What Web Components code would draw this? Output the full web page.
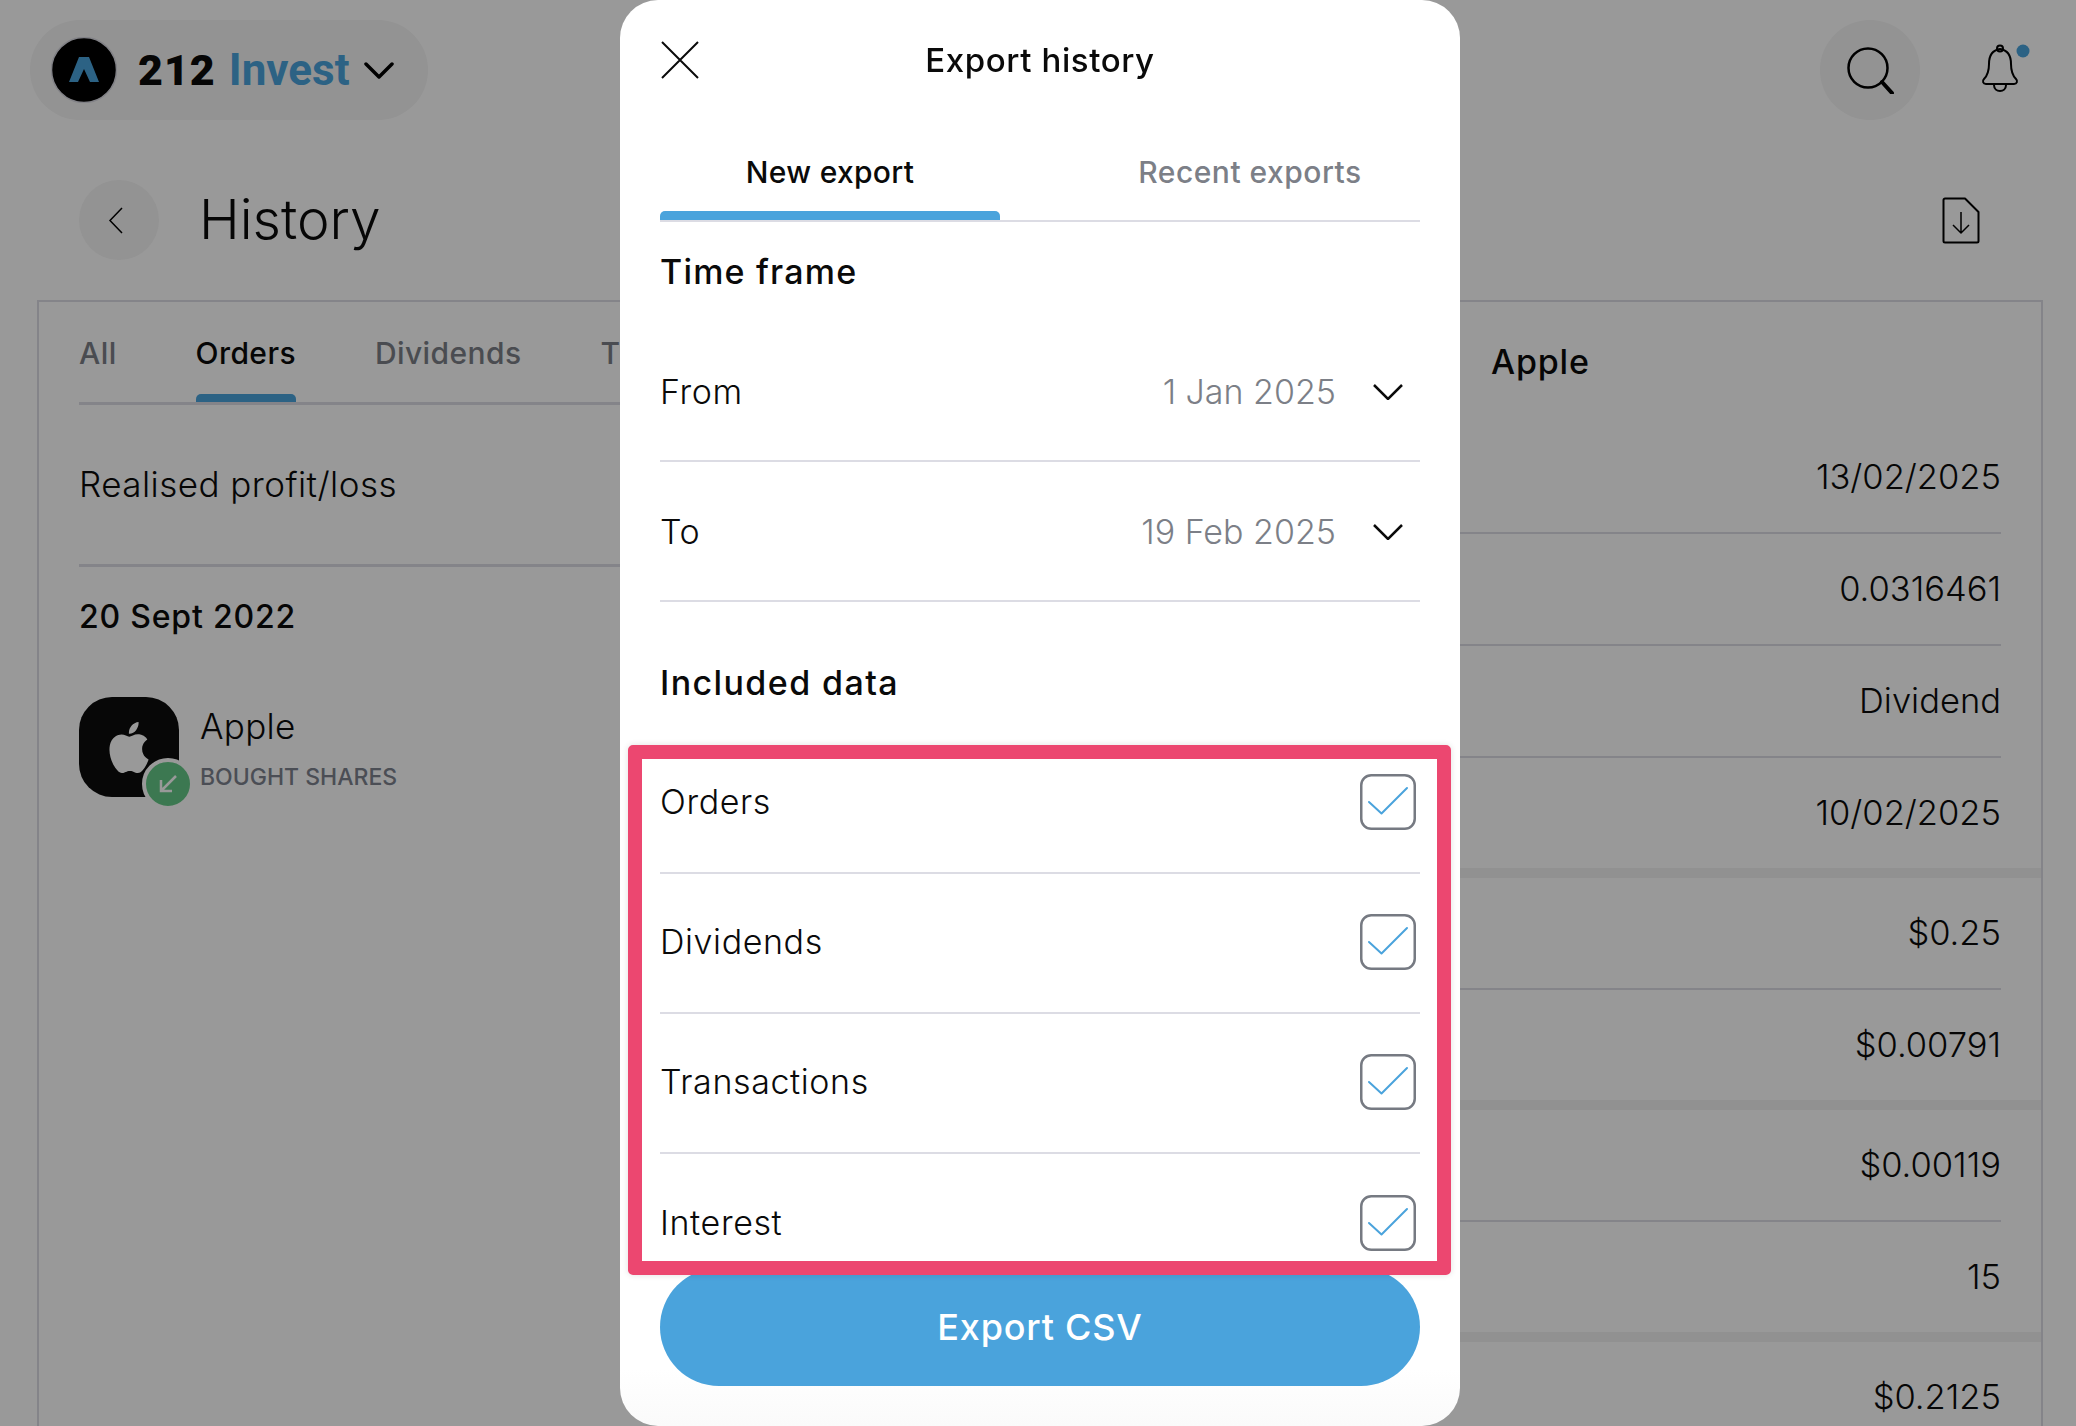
<!DOCTYPE html>
<html lang="en">
<head>
<meta charset="utf-8">
<title>Export history</title>
<style>
  html, body { margin: 0; height: 100%; overflow: hidden; background: #fff; }
  body { font-family: Inter, "Noto Sans", sans-serif; color: #0a0a0a; }
</style>
</head>
<body>
<app-header></app-header>
<page-title>History</page-title>
<history-panel>
  <order-list slot="left"></order-list>
  <order-detail slot="right"></order-detail>
</history-panel>
<export-modal></export-modal>

<script>
// Top bar: account switcher on the left, search and notifications on the right
class AppHeader extends HTMLElement {
  constructor() {
    super();
    this.attachShadow({ mode: 'open' });
  }

  connectedCallback() {
    this.shadowRoot.innerHTML = `
      <style>
        :host { display: flex; justify-content: space-between; align-items: center; height: 100px; padding: 20px 46px 0 30px; }
        .account { display: flex; align-items: center; height: 100px; width: 398px; box-sizing: border-box; padding-left: 21px; border-radius: 50px; background: #f5f5f5; }
        .logo { width: 66px; height: 66px; flex: none; }
        .brand { margin-left: 21px; font: 700 44px/1 "Liberation Sans Narrow", Roboto, sans-serif; display: flex; gap: 13px; }
        .num { font-family: Roboto, sans-serif; font-size: 43px; font-weight: 900; letter-spacing: 1px; line-height: 44px; }
        .name { color: #4aa3dc; }
        .caret { width: 30px; height: 17px; margin-left: 14px; }
        .tools { display: flex; align-items: center; }
        .search { width: 100px; height: 100px; border-radius: 50%; background: #f5f5f5; display: flex; align-items: center; justify-content: center; }
        .bell { width: 50px; height: 52px; margin-left: 60px; margin-top: 0; }
      </style>
      <div class="account">
        <svg class="logo" viewBox="0 0 66 66">
          <circle cx="33" cy="33" r="32.500" fill="#000" stroke="#d8d8e0" stroke-width="1.500"/>
          <path d="M28 20h10l10 25h-9l-6-13-6 13h-9z" fill="#4aa3dc"/>
        </svg>
        <div class="brand"><span class="num">212</span><span class="name">Invest</span></div>
        <svg class="caret" viewBox="0 0 30 17" fill="none" stroke="#000" stroke-width="3.500" stroke-linecap="round" stroke-linejoin="round"><path d="M2 2l13 13L28 2"/></svg>
      </div>
      <div class="tools">
        <div class="search">
          <svg width="48" height="48" viewBox="0 0 48 48" fill="none" stroke="#000">
            <circle cx="22" cy="22" r="19.500" stroke-width="2.500"/>
            <path d="M36 36l10 11" stroke-width="4" stroke-linecap="round"/>
          </svg>
        </div>
        <svg class="bell" viewBox="0 0 50 52" fill="none" stroke="#000" stroke-width="2">
          <path d="M20 40H6c-3 0-4-3-2-5 4-4 5-8 5-15 0-9 4-14 11-15 7 1 11 6 11 15 0 7 1 11 5 15 2 2 1 5-2 5z"/>
          <circle cx="20" cy="4.500" r="3"/>
          <path d="M14 41c0 4 3 6 6 6s6-2 6-6"/>
          <circle cx="43" cy="7" r="6.500" fill="#4aa3dc" stroke="none"/>
        </svg>
      </div>
    `;
  }
}

// Back button, page heading and the export icon
class PageTitle extends HTMLElement {
  constructor() {
    super();
    this.attachShadow({ mode: 'open' });
  }

  connectedCallback() {
    this.shadowRoot.innerHTML = `
      <style>
        :host { display: flex; align-items: center; height: 80px; padding: 60px 96px 40px 79px; }
        .back { width: 80px; height: 80px; border-radius: 50%; background: #f5f5f5; display: flex; align-items: center; justify-content: center; }
        .back svg { margin-right: 8px; }
        h1 { margin: 0 0 0 40px; font-size: 55px; font-weight: 300; line-height: 78px; height: 80px; flex: 1; }
      </style>
      <div class="back">
        <svg width="15" height="27" viewBox="0 0 15 27" fill="none" stroke="#000" stroke-width="1.500"><path d="M14 1L2 13.500 14 26"/></svg>
      </div>
      <h1><slot></slot></h1>
      <svg width="38" height="47" viewBox="0 0 38 47" fill="none" stroke="#000" stroke-width="2" stroke-linejoin="round">
        <path d="M3 1.500h20L36.500 15v29a1.500 1.500 0 0 1-1.500 1.500H3A1.500 1.500 0 0 1 1.500 44V3A1.500 1.500 0 0 1 3 1.500z"/>
        <path d="M19 15v21M11 28l8 8 8-8" stroke-width="1.500"/>
      </svg>
    `;
  }
}

// Bordered frame with the list on the left and the detail on the right
class HistoryPanel extends HTMLElement {
  constructor() {
    super();
    this.attachShadow({ mode: 'open' });
  }

  connectedCallback() {
    this.shadowRoot.innerHTML = `
      <style>
        :host { display: flex; box-sizing: border-box; margin: 0 33px 0 37px; height: 1126px; border: 2px solid #dcdce4; border-bottom: 0; overflow: hidden; }
        .left { flex: 0 0 1400px; }
        .right { flex: 1; min-width: 0; }
      </style>
      <div class="left"><slot name="left"></slot></div>
      <div class="right"><slot name="right"></slot></div>
    `;
  }
}

class OrderList extends HTMLElement {
  constructor() {
    super();
    this.attachShadow({ mode: 'open' });
  }

  connectedCallback() {
    this.shadowRoot.innerHTML = `
      <style>
        :host { display: block; padding-left: 40px; }
        .tabs { display: flex; height: 100px; border-bottom: 3px solid #dcdce4; font-size: 30px; font-weight: 500; letter-spacing: .4px; color: #7c7f87; }
        .tab { position: relative; height: 100px; line-height: 103px; margin-right: 79px; }
        .tab.on { color: #0a0a0a; }
        .tab.on::after { content: ""; position: absolute; left: 0; right: 0; bottom: 0; height: 8px; border-radius: 5px 5px 0 0; background: #4aa3dc; }
        .pl { height: 159px; line-height: 158px; font-size: 35px; font-weight: 300; letter-spacing: .45px; border-bottom: 3px solid #dcdce4; }
        .date { margin-top: 30px; font-size: 32px; font-weight: 500; letter-spacing: .8px; line-height: 40px; }
        .item { display: flex; margin-top: 60px; }
        .icon { position: relative; width: 100px; height: 100px; border-radius: 33px; background: #0c0c0c; display: flex; align-items: center; justify-content: center; }
        .badge { position: absolute; right: -15px; bottom: -13px; width: 44px; height: 44px; border-radius: 50%; background: #65c987; border: 4px solid #fff; display: flex; align-items: center; justify-content: center; }
        .name { margin: 9px 0 0 21px; font-size: 35px; font-weight: 300; letter-spacing: .3px; line-height: 40px; }
        .sub { margin: 15px 0 0 21px; font-size: 23px; font-weight: 500; line-height: 32px; color: #7d828e; }
      </style>
      <div class="tabs">
        <div class="tab">All</div>
        <div class="tab on">Orders</div>
        <div class="tab">Dividends</div>
        <div class="tab">Transactions</div>
      </div>
      <div class="pl">Realised profit/loss</div>
      <div class="date">20 Sept 2022</div>
      <div class="item">
        <div class="icon">
          <svg width="42" height="51" viewBox="1.500 0 21 24" preserveAspectRatio="none" fill="#fff"><path d="M12.152 6.896c-.948 0-2.415-1.078-3.960-1.040-2.040.027-3.910 1.183-4.961 3.014-2.117 3.675-.546 9.103 1.519 12.090 1.013 1.454 2.208 3.090 3.792 3.039 1.520-.065 2.090-.987 3.935-.987 1.831 0 2.350.987 3.960.948 1.637-.026 2.676-1.480 3.676-2.948 1.156-1.688 1.636-3.325 1.662-3.415-.039-.013-3.182-1.221-3.220-4.857-.026-3.040 2.480-4.494 2.597-4.559-1.429-2.090-3.623-2.324-4.390-2.376-2-.156-3.675 1.090-4.610 1.090zM15.530 3.830c.843-1.012 1.400-2.427 1.245-3.830-1.207.052-2.662.805-3.532 1.818-.780.896-1.454 2.338-1.273 3.714 1.338.104 2.715-.688 3.559-1.701"/></svg>
          <span class="badge">
            <svg width="20" height="20" viewBox="0 0 20 20" fill="none" stroke="#fff" stroke-width="2.500"><path d="M18 2L3 17M3 6v11h11"/></svg>
          </span>
        </div>
        <div>
          <div class="name">Apple</div>
          <div class="sub">BOUGHT SHARES</div>
        </div>
      </div>
    `;
  }
}

// One group of right aligned values
class DetailGroup extends HTMLElement {
  constructor() {
    super();
    this.attachShadow({ mode: 'open' });
  }

  connectedCallback() {
    const rows = (this.getAttribute('values') || '').split('|');
    this.shadowRoot.innerHTML = `
      <style>
        :host { display: block; border-bottom: 10px solid #f2f2f2; }
        :host(:last-child) { border-bottom: 0; }
        .row { height: 108px; padding-bottom: 2px; margin-right: 40px; border-bottom: 2px solid #dcdce4; display: flex; align-items: center; justify-content: flex-end; font-size: 34.500px; font-weight: 300; }
        .row:last-child { border-bottom: 0; }
      </style>
      ${rows.map(v => `<div class="row">${v}</div>`).join('')}
    `;
  }
}
customElements.define('detail-group', DetailGroup);

class OrderDetail extends HTMLElement {
  constructor() {
    super();
    this.attachShadow({ mode: 'open' });
  }

  connectedCallback() {
    this.shadowRoot.innerHTML = `
      <style>
        :host { display: block; }
        h2 { margin: 0; padding: 40px 0 0 52px; height: 80px; font-size: 34px; font-weight: 500; letter-spacing: .8px; line-height: 40px; }
      </style>
      <h2>Apple</h2>
      <detail-group values="13/02/2025|0.0316461|Dividend|10/02/2025"></detail-group>
      <detail-group values="$0.25|$0.00791"></detail-group>
      <detail-group values="$0.00119|15"></detail-group>
      <detail-group values="$0.2125"></detail-group>
    `;
  }
}

// Row in the modal: label on the left, a date picker value or a slotted control on the right
class ModalRow extends HTMLElement {
  constructor() {
    super();
    this.attachShadow({ mode: 'open' });
  }

  connectedCallback() {
    const value = this.getAttribute('value');
    this.shadowRoot.innerHTML = `
      <style>
        :host { display: flex; align-items: center; box-sizing: border-box; height: 140px; flex: none; border-bottom: 2px solid #dcdce4; font-size: 34px; font-weight: 300; color: #0a0a0a; }
        :host(:last-child) { border-bottom: 0; }
        .label { flex: 1; letter-spacing: .6px; }
        .value { color: #7c7f87; margin-right: 37px; }
        svg { display: block; margin: 2px 17px 0 0; }
      </style>
      <span class="label"><slot></slot></span>
      ${value ? `<span class="value">${value}</span>
        <svg width="30" height="16" viewBox="0 0 30 16" fill="none" stroke="#0a0a0a" stroke-width="2.500"><path d="M1 1l14 14L29 1"/></svg>` : ''}
      <slot name="end"></slot>
    `;
  }
}

class CheckBox extends HTMLElement {
  constructor() {
    super();
    this.attachShadow({ mode: 'open' });
  }

  connectedCallback() {
    this.shadowRoot.innerHTML = `
      <style>
        :host { display: block; width: 56px; height: 56px; margin: 2px 4px 0 0; }
        svg { display: block; }
      </style>
      <svg width="56" height="56" viewBox="0 0 56 56" fill="none">
        <rect x="1.250" y="1.250" width="53.500" height="53.500" rx="10" stroke="#767a82" stroke-width="2.500"/>
        <path d="M9 28l12.500 11.500L47 14" stroke="#4aa3dc" stroke-width="2" stroke-linejoin="round" stroke-linecap="round"/>
      </svg>
    `;
  }
}

class ExportModal extends HTMLElement {
  constructor() {
    super();
    this.attachShadow({ mode: 'open' });
  }

  connectedCallback() {
    const rows = ['Orders', 'Dividends', 'Transactions', 'Interest'];
    this.shadowRoot.innerHTML = `
      <style>
        :host { position: fixed; inset: 0; display: flex; padding-left: 620px; background: rgba(0, 0, 0, 0.4); }
        .dialog { position: relative; box-sizing: border-box; width: 840px; height: 1426px; padding: 0 40px 40px; border-radius: 38px; display: flex; flex-direction: column; background: linear-gradient(#fff 96%, #fafafa); overflow: hidden; }
        header { position: relative; flex: none; height: 120px; display: flex; align-items: center; justify-content: center; font-size: 33px; font-weight: 500; letter-spacing: .6px; }
        header svg { position: absolute; left: 1px; top: 41px; }
        .tabs { flex: none; display: flex; height: 100px; border-bottom: 2px solid #dcdce4; font-size: 30px; font-weight: 500; letter-spacing: .3px; color: #7c7f87; }
        .tab { position: relative; flex: 1; text-align: center; line-height: 104px; }
        .tab.on { flex: 0 0 340px; color: #0a0a0a; }
        .tab.on::after { content: ""; position: absolute; left: 0; right: 0; bottom: 0; height: 9px; border-radius: 5px 5px 0 0; background: #4aa3dc; }
        .tab.off { padding-left: 80px; letter-spacing: .5px; }
        .title { flex: none; font-size: 34px; font-weight: 500; letter-spacing: 1.200px; line-height: 100px; height: 100px; }
        .title.gap { margin-top: 32px; line-height: 98px; letter-spacing: 1.400px; }
        .list { flex: 1; min-height: 0; overflow: hidden; display: flex; flex-direction: column; }
        .list modal-row { padding-bottom: 4px; }
        button { flex: none; height: 118px; border: 0; border-radius: 59px; background: #4aa3dc; color: #fff; font: 500 36px Inter, sans-serif; letter-spacing: .8px; }
        .mark { position: absolute; left: 8px; top: 745px; width: 823px; height: 530px; box-sizing: border-box; border: 14px solid #ec4770; border-radius: 5px; box-shadow: 0 0 6px rgba(0, 0, 0, 0.12); }
      </style>
      <div class="dialog">
        <header>
          <svg width="38" height="38" viewBox="0 0 38 38" fill="none" stroke="#0a0a0a" stroke-width="2"><path d="M1 1l36 36M37 1L1 37"/></svg>
          Export history
        </header>
        <div class="tabs">
          <div class="tab on">New export</div>
          <div class="tab off">Recent exports</div>
        </div>
        <div class="title">Time frame</div>
        <modal-row value="1 Jan 2025">From</modal-row>
        <modal-row value="19 Feb 2025">To</modal-row>
        <div class="title gap">Included data</div>
        <div class="list">
          ${rows.map(r => `<modal-row>${r}<check-box slot="end"></check-box></modal-row>`).join('')}
        </div>
        <button>Export CSV</button>
        <div class="mark"></div>
      </div>
    `;
  }
}

customElements.define('app-header', AppHeader);
customElements.define('page-title', PageTitle);
customElements.define('history-panel', HistoryPanel);
customElements.define('order-list', OrderList);
customElements.define('order-detail', OrderDetail);
customElements.define('modal-row', ModalRow);
customElements.define('check-box', CheckBox);
customElements.define('export-modal', ExportModal);
</script>
</body>
</html>
